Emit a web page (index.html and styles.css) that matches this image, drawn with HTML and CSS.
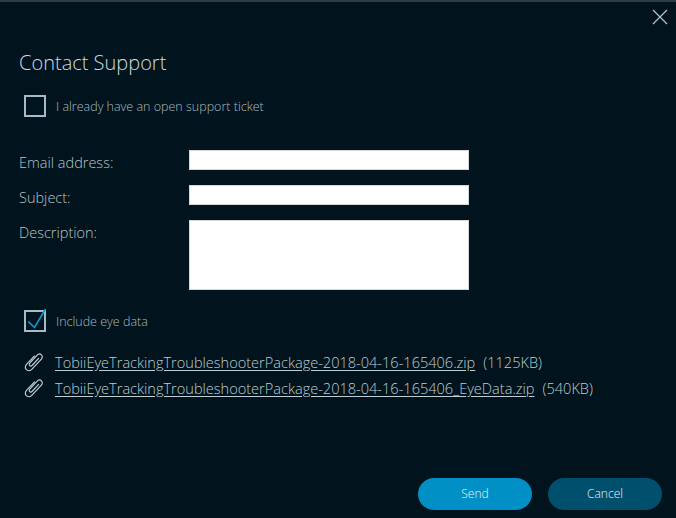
FILE: index.html
```html
<!DOCTYPE html>
<html lang="en">
<head>
<meta charset="utf-8">
<title>Contact Support</title>
<link rel="stylesheet" href="styles.css">
</head>
<body>
<div class="dialog">
  <div class="close-row">
    <svg class="close" width="16" height="16" viewBox="0 0 16 16"><path d="M1 1L15 15M15 1L1 15" stroke="#b4c6cc" stroke-width="1.2" fill="none"/></svg>
  </div>
  <h1 class="title">Contact Support</h1>
  <div class="check-row first">
    <span class="box"></span>
    <span class="check-label">I already have an open support ticket</span>
  </div>
  <div class="form">
    <label class="label">Email address:</label><div class="input"></div>
    <label class="label">Subject:</label><div class="input"></div>
    <label class="label">Description:</label><div class="input area"></div>
  </div>
  <div class="check-row second">
    <span class="box">
      <svg class="tick" width="24" height="22" viewBox="0 0 24 22"><path d="M4.3 11.7L10.5 17.5L21.5 -1" stroke="#0d96cc" stroke-width="1.7" fill="none"/></svg>
    </span>
    <span class="check-label">Include eye data</span>
  </div>
  <ul class="files">
    <li class="file">
      <svg class="clip" width="20" height="20" viewBox="1 1 19 19"><path d="M6.5 11.5L13.3 4.2C14.6 2.8 16.4 2.6 17.6 3.7C18.8 4.8 18.6 6.6 17.3 8L8.6 17.2C7 18.9 4.6 19.1 3.2 17.8C1.8 16.5 2 14.2 3.6 12.5L11.2 4.4M6.5 11.5C5.8 12.3 5.8 13.3 6.4 13.9C7 14.5 8 14.4 8.8 13.6L15.2 6.8" stroke="#c4d2d6" stroke-width="1.1" fill="none"/></svg>
      <a class="link">TobiiEyeTrackingTroubleshooterPackage-2018-04-16-165406.zip</a>
      <span class="size">(1125KB)</span>
    </li>
    <li class="file">
      <svg class="clip" width="20" height="20" viewBox="1 1 19 19"><path d="M6.5 11.5L13.3 4.2C14.6 2.8 16.4 2.6 17.6 3.7C18.8 4.8 18.6 6.6 17.3 8L8.6 17.2C7 18.9 4.6 19.1 3.2 17.8C1.8 16.5 2 14.2 3.6 12.5L11.2 4.4M6.5 11.5C5.8 12.3 5.8 13.3 6.4 13.9C7 14.5 8 14.4 8.8 13.6L15.2 6.8" stroke="#c4d2d6" stroke-width="1.1" fill="none"/></svg>
      <a class="link">TobiiEyeTrackingTroubleshooterPackage-2018-04-16-165406_EyeData.zip</a>
      <span class="size">(540KB)</span>
    </li>
  </ul>
  <div class="actions">
    <button class="btn send">Send</button>
    <button class="btn cancel">Cancel</button>
  </div>
</div>
</body>
</html>
```
FILE: styles.css
```css
html, body {
  margin: 0;
  padding: 0;
  background: #01131c;
}
.dialog {
  box-sizing: border-box;
  width: 676px;
  height: 518px;
  background: #01131c;
  border-top: 2px solid #2a3d46;
  font-family: "Open Sans", "Liberation Sans", sans-serif;
  font-weight: 300;
  color: #b4c6cc;
  display: flex;
  flex-direction: column;
  overflow: hidden;
}
.close-row {
  display: flex;
  justify-content: flex-end;
  padding: 7px 8px 0 0;
  height: 16px;
}
.title {
  margin: 24px 0 0 19px;
  font-size: 20px;
  line-height: 28px;
  font-weight: 300;
  color: #cbdce2;
}
.check-row {
  display: flex;
  align-items: center;
  margin-left: 24px;
  gap: 10px;
}
.check-row.first { margin-top: 17px; }
.check-row.second { margin-top: 19px; }
.box {
  box-sizing: border-box;
  display: block;
  position: relative;
  width: 22px;
  height: 22px;
  border: 2px solid #a4bcc6;
}
.tick {
  position: absolute;
  left: -2px;
  top: -2px;
  overflow: visible;
}
.check-label {
  font-size: 12.5px;
  line-height: 22px;
  padding-top: 2px;
  color: #a9bcc3;
}
.form {
  display: grid;
  grid-template-columns: 170px 280px;
  row-gap: 15px;
  margin: 32px 0 0 19px;
}
.label {
  font-size: 14.5px;
  height: 20px;
  line-height: 26px;
  color: #b4c6cc;
}
.input {
  box-sizing: border-box;
  height: 20px;
  background: #fff;
  border: 1px solid #d4d8da;
}
.input.area {
  height: 70px;
}
.files {
  list-style: none;
  margin: 16px 0 0 0;
  padding: 0 0 0 24px;
}
.file {
  display: flex;
  align-items: center;
  height: 26px;
  font-size: 14.55px;
  color: #bccdd3;
}
.clip {
  flex: none;
  margin-right: 11px;
}
.link {
  text-decoration: underline;
  text-underline-offset: 2px;
  white-space: nowrap;
}
.size {
  margin-left: 8px;
  white-space: nowrap;
}
.actions {
  margin-top: auto;
  padding: 0 14px 8px 0;
  display: flex;
  justify-content: flex-end;
  gap: 16px;
}
.btn {
  width: 114px;
  height: 32px;
  border: 0;
  border-radius: 16px;
  color: #eaf5f8;
  font-family: inherit;
  font-weight: 300;
  font-size: 12px;
  padding: 0 0 2px;
}
.send { background: #0090c5; }
.cancel { background: #00506d; }
```
